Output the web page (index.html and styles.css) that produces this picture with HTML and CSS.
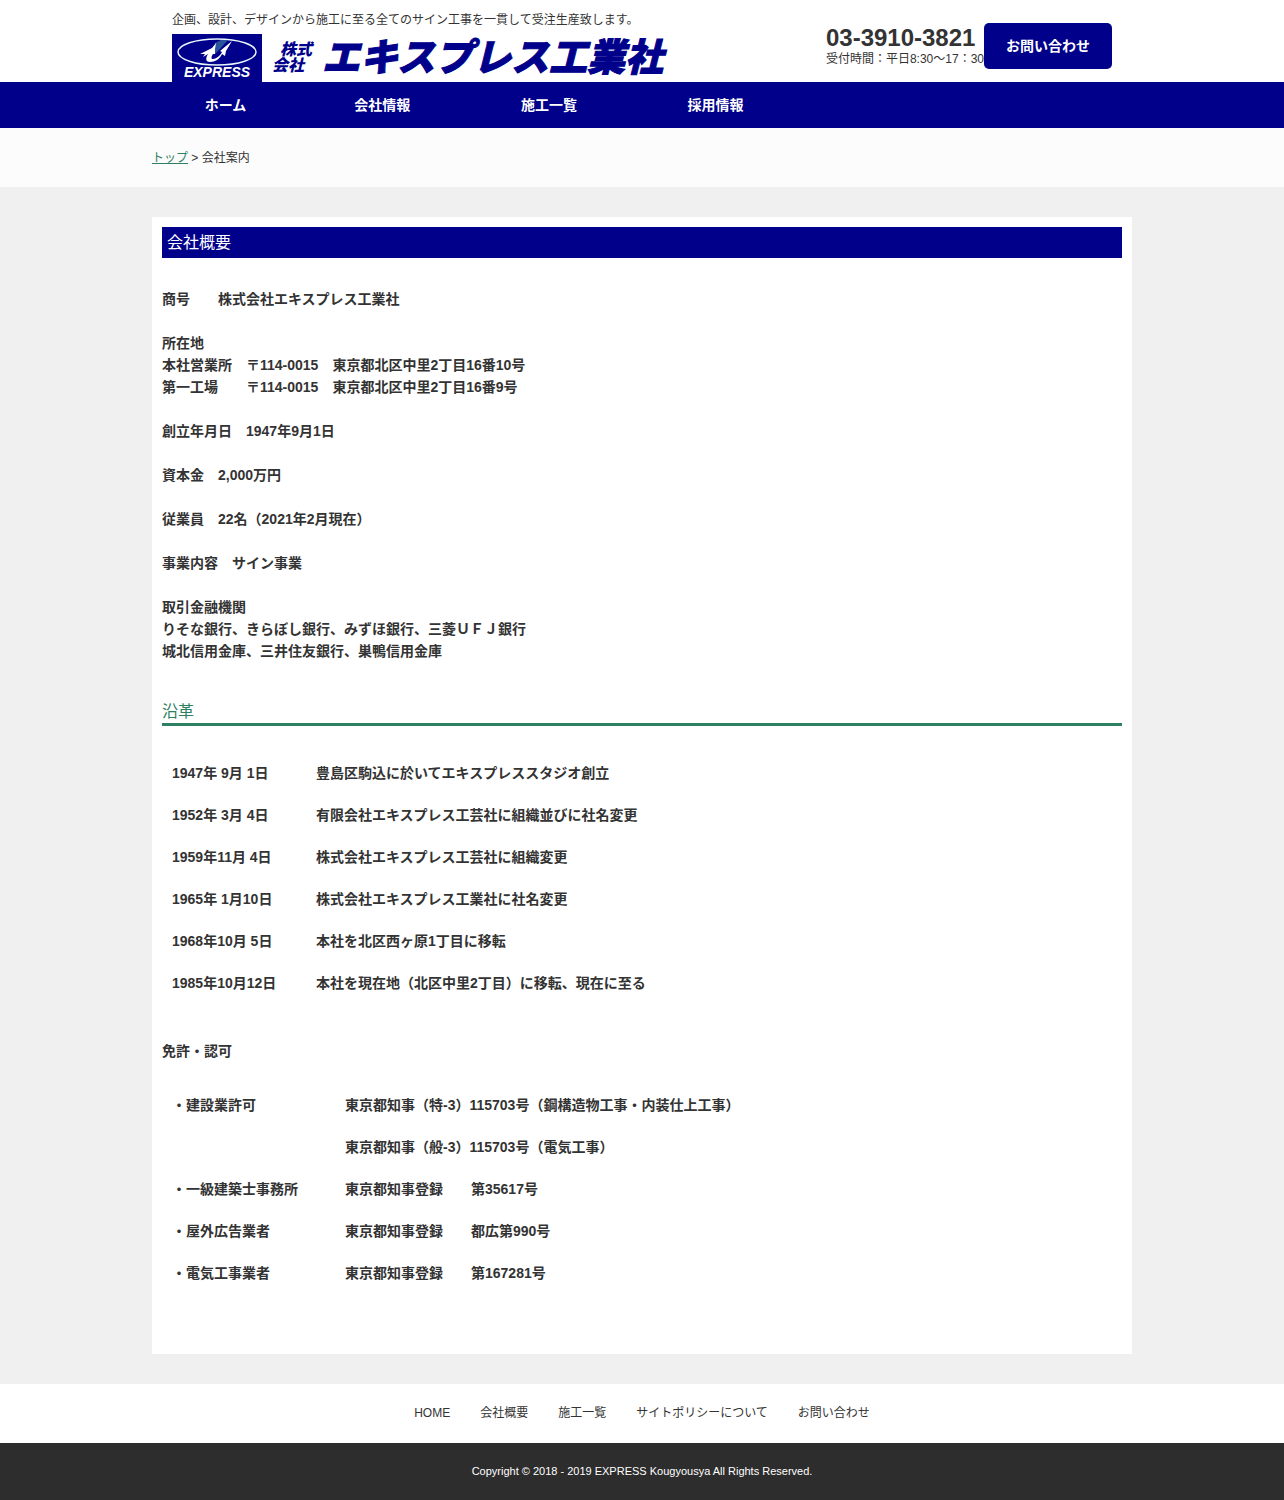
FILE: index.html
```html
<!DOCTYPE html>
<html lang="ja">
<head>
    <meta charset="UTF-8">
    <meta name="viewport" content="width=device-width, initial-scale=1.0">
    <title>会社案内 | 株式会社エキスプレス工業社</title>
    <link rel="stylesheet" href="styles.css">
</head>
<body>
    <header class="header">
        <div class="header-inner">
            <div class="header-left">
                <p class="tagline">企画、設計、デザインから施工に至る全てのサイン工事を一貫して受注生産致します。</p>
                <a href="#" class="logo">
                    <svg class="logo-mark" viewBox="0 0 90 48" aria-hidden="true">
                        <rect width="90" height="48" fill="#00008b"/>
                        <ellipse cx="45" cy="18" rx="39" ry="13" fill="none" stroke="#e8f4fb" stroke-width="1.500"/>
                        <path d="M43 9 L49 6 L56 6 L47 16 L43 20 Z" fill="#2a549c"/>
                        <path d="M44 9 L40 14 L28 20 L33 20 L31 23 L36 20 C33 25 34 28 38 28 C43 28 48 25 50 20 L53 22 L54 17 L60 7 L48 17 L50 18 C48 22 44 25 41 25 C39 25 39 23 41 20 L43 20 L43 15 Z" fill="#fff"/>
                        <text x="45" y="43" text-anchor="middle" class="logo-mark-text">EXPRESS</text>
                    </svg>
                    <span class="logo-kind">
                        <span class="logo-kind-top">株式</span>
                        <span>会社</span>
                    </span>
                    <span class="logo-name">エキスプレス工業社</span>
                </a>
            </div>
            <div class="header-right">
                <div class="tel">
                    <p class="tel-number">03-3910-3821</p>
                    <p class="tel-time">受付時間：平日8:30～17：30</p>
                </div>
                <a href="#" class="contact-button">お問い合わせ</a>
            </div>
        </div>
    </header>

    <nav class="nav">
        <ul class="nav-list">
            <li><a href="#">ホーム</a></li>
            <li><a href="#">会社情報</a></li>
            <li><a href="#">施工一覧</a></li>
            <li><a href="#">採用情報</a></li>
        </ul>
    </nav>

    <div class="breadcrumb">
        <p class="breadcrumb-inner"><a href="#">トップ</a> &gt; 会社案内</p>
    </div>

    <main class="main">
        <div class="content">
            <h1 class="title">会社概要</h1>
            <div class="profile">
                <p>商号　　株式会社エキスプレス工業社</p>
                <p>所在地<br>
                本社営業所　〒114-0015　東京都北区中里2丁目16番10号<br>
                第一工場　　〒114-0015　東京都北区中里2丁目16番9号</p>
                <p>創立年月日　1947年9月1日</p>
                <p>資本金　2,000万円</p>
                <p>従業員　22名（2021年2月現在）</p>
                <p>事業内容　サイン事業</p>
                <p>取引金融機関<br>
                りそな銀行、きらぼし銀行、みずほ銀行、三菱ＵＦＪ銀行<br>
                城北信用金庫、三井住友銀行、巣鴨信用金庫</p>
            </div>

            <h2 class="subtitle">沿革</h2>
            <table class="history">
                <tr><th scope="row">1947年 9月 1日</th><td>豊島区駒込に於いてエキスプレススタジオ創立</td></tr>
                <tr><th scope="row">1952年 3月 4日</th><td>有限会社エキスプレス工芸社に組織並びに社名変更</td></tr>
                <tr><th scope="row">1959年11月 4日</th><td>株式会社エキスプレス工芸社に組織変更</td></tr>
                <tr><th scope="row">1965年 1月10日</th><td>株式会社エキスプレス工業社に社名変更</td></tr>
                <tr><th scope="row">1968年10月 5日</th><td>本社を北区西ヶ原1丁目に移転</td></tr>
                <tr><th scope="row">1985年10月12日</th><td>本社を現在地（北区中里2丁目）に移転、現在に至る</td></tr>
            </table>

            <h3 class="license-title">免許・認可</h3>
            <table class="license">
                <tr><th scope="row">・建設業許可</th><td>東京都知事（特-3）115703号（鋼構造物工事・内装仕上工事）</td></tr>
                <tr><td></td><td>東京都知事（般-3）115703号（電気工事）</td></tr>
                <tr><th scope="row">・一級建築士事務所</th><td>東京都知事登録　　第35617号</td></tr>
                <tr><th scope="row">・屋外広告業者</th><td>東京都知事登録　　都広第990号</td></tr>
                <tr><th scope="row">・電気工事業者</th><td>東京都知事登録　　第167281号</td></tr>
            </table>
        </div>
    </main>

    <footer class="footer">
        <ul class="footer-nav">
            <li><a href="#">HOME</a></li>
            <li><a href="#">会社概要</a></li>
            <li><a href="#">施工一覧</a></li>
            <li><a href="#">サイトポリシーについて</a></li>
            <li><a href="#">お問い合わせ</a></li>
        </ul>
        <p class="copyright">Copyright © 2018 - 2019 EXPRESS Kougyousya All Rights Reserved.</p>
    </footer>
</body>
</html>
```
FILE: styles.css
```css
* {
    margin: 0;
    padding: 0;
    box-sizing: border-box;
}

body {
    background-color: #fff;
    color: #333;
    font-family: "Liberation Sans", "Noto Sans CJK JP", sans-serif;
    font-size: 14px;
    line-height: 22px;
}

ul {
    list-style: none;
}

a {
    color: inherit;
    text-decoration: none;
}

/* Header */
.header-inner {
    max-width: 940px;
    margin: 0 auto;
    display: flex;
    justify-content: space-between;
    align-items: flex-end;
}

.tagline {
    font-size: 12px;
    line-height: 19px;
    margin: 11px 0 4px;
}

.logo {
    display: flex;
    align-items: center;
    color: #00008b;
    font-style: italic;
    font-weight: 900;
    white-space: nowrap;
}

.logo-mark {
    width: 90px;
    height: 48px;
    margin-right: 10px;
}

.logo-mark-text {
    fill: #fff;
    font-size: 14px;
    font-weight: bold;
    font-style: italic;
}

.logo-kind {
    display: flex;
    flex-direction: column;
    font-size: 16px;
    line-height: 16px;
    margin-right: 10px;
}

.logo-kind-top {
    padding-left: 8px;
}

.logo-name {
    font-size: 38px;
    line-height: 48px;
    -webkit-text-stroke: 1px #00008b;
}

.header-right {
    display: flex;
    align-items: center;
    padding-bottom: 13px;
}

.tel {
    padding-top: 2px;
}

.tel-number {
    font-size: 24px;
    font-weight: bold;
    line-height: 24px;
}

.tel-time {
    font-size: 12px;
    line-height: 19px;
}

.contact-button {
    background-color: #00008b;
    color: #fff;
    border-radius: 5px;
    padding: 12px 22px;
    font-weight: bold;
}

/* Global navigation */
.nav {
    background-color: #00008b;
}

.nav-list {
    max-width: 980px;
    margin: 0 auto;
    display: flex;
}

.nav-list li {
    width: 17%;
}

.nav-list li:first-child {
    width: 15%;
}

.nav-list a {
    display: block;
    padding: 12px 0;
    color: #fff;
    font-weight: bold;
    text-align: center;
}

.breadcrumb {
    background-color: #fcfcfc;
    padding: 21px 0 19px;
}

.breadcrumb-inner {
    max-width: 980px;
    margin: 0 auto;
    font-size: 12px;
    line-height: 19px;
}

.breadcrumb a {
    color: #2e8062;
    text-decoration: underline;
}

/* Main content */
.main {
    background-color: #f0f0f0;
    padding: 30px 0;
}

.content {
    max-width: 980px;
    margin: 0 auto;
    padding: 10px 10px 60px;
    background-color: #fff;
}

.title {
    background-color: #00008b;
    color: #fff;
    padding: 5px;
    margin-bottom: 30px;
    font-size: 16px;
    font-weight: normal;
    line-height: 21px;
}

.profile {
    margin-bottom: 38px;
    font-weight: bold;
}

.profile p + p {
    margin-top: 22px;
}

.subtitle {
    color: #2e8062;
    border-bottom: 3px solid #2e8062;
    margin-bottom: 26px;
    font-size: 16px;
    font-weight: normal;
    line-height: 23px;
}

table {
    border-collapse: collapse;
    font-weight: bold;
}

th,
td {
    height: 42px;
    padding: 10px;
    text-align: left;
}

.history th {
    width: 144px;
}

.license-title {
    margin: 36px 0 22px;
    font-size: 14px;
}

.license th {
    width: 173px;
}

/* Footer */
.footer-nav {
    display: flex;
    justify-content: center;
    flex-wrap: wrap;
    gap: 0 30px;
    padding: 20px 0;
    font-size: 12px;
    line-height: 19px;
}

.copyright {
    background-color: #2d2d2d;
    color: #fff;
    padding: 20px 0;
    font-size: 11px;
    line-height: 17px;
    text-align: center;
}
```
